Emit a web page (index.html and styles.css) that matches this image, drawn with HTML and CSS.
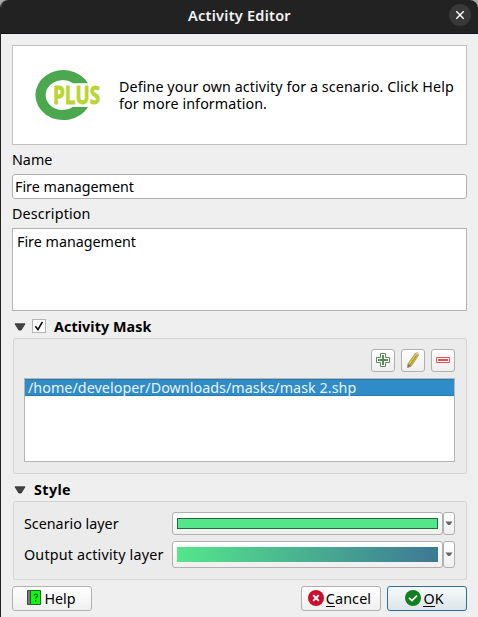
FILE: index.html
```html
<!DOCTYPE html>
<html lang="en">
<head>
<meta charset="utf-8">
<title>Activity Editor</title>
<link rel="stylesheet" href="styles.css">
</head>
<body>
<div class="window">
  <header class="titlebar">
    <h1 class="title">Activity Editor</h1>
    <button class="close" aria-label="Close"><svg width="22" height="22" viewBox="0 0 22 22"><path d="M7.3 7.3l7.4 7.4M14.7 7.3l-7.4 7.4" stroke="#fff" stroke-width="1.4"/></svg></button>
  </header>
  <main class="content">
    <section class="banner">
      <svg class="logo" width="66" height="50" viewBox="0 0 66 50">
        <path d="M53 13.2A28 25 0 1 0 53 37H38A17 15 0 1 1 38 13.2Z" fill="#4ba84f"/>
        <text class="logo-text" x="18" y="34" textLength="47" lengthAdjust="spacingAndGlyphs">PLUS</text>
      </svg>
      <p class="intro"><span class="intro-line">Define your own activity for a scenario. Click Help</span> <span class="intro-line">for more information.</span></p>
    </section>
    <label class="label name-label">Name</label>
    <div class="input"><span class="fire">Fire management</span></div>
    <label class="label desc-label">Description</label>
    <div class="textarea"><span class="fire">Fire management</span></div>

    <div class="heading mask-heading">
      <svg class="tri" width="12" height="8" viewBox="0 0 12 8"><path d="M1 .8h10L7.2 7H4.8Z" fill="#444" stroke="#2b2b2b" stroke-width=".8"/></svg>
      <span class="check"><svg width="12" height="12" viewBox="0 0 12 12"><path d="M2.3 6.2L5 9.6 9.4 1.8" fill="none" stroke="#111" stroke-width="1.7"/></svg></span>
      <span class="mask-title">Activity Mask</span>
    </div>
    <section class="group mask-group">
      <div class="tools">
        <button class="tool" aria-label="Add"><svg width="16" height="16" viewBox="0 0 16 16"><path d="M5.5 1.5h5v4h4v5h-4v4h-5v-4h-4v-5h4z" fill="#fff" stroke="#5a8c5a"/><path d="M8 3v10M3 8h10" stroke="#5a8c5a" stroke-width="2"/></svg></button>
        <button class="tool" aria-label="Edit"><svg width="16" height="16" viewBox="0 0 16 16"><path d="M10.4 1.2L13.6 3 6.3 14 2.6 15.5 3 11.8Z" fill="#dfca48" stroke="#9c8c31" stroke-width=".8"/><path d="M11.5 3.5L5 13" stroke="#a9942c" stroke-width="1.2"/><path d="M10.4 1.2L12 .3 14 1.5 13.6 3.2Z" fill="#ddd" stroke="#aaa" stroke-width=".5"/><path d="M3 11.8L6.3 14 2.6 15.6Z" fill="#777"/></svg></button>
        <button class="tool" aria-label="Remove"><svg width="16" height="16" viewBox="0 0 16 16"><path d="M1.5 5.5h13v5h-13z" fill="#fff" stroke="#ec4e51"/><path d="M3 8h10" stroke="#ec4e51" stroke-width="2"/></svg></button>
      </div>
      <div class="list"><div class="row-selected"><span class="path">/home/developer/Downloads/masks/mask 2.shp</span></div></div>
    </section>

    <div class="heading style-heading">
      <svg class="tri" width="12" height="8" viewBox="0 0 12 8"><path d="M1 .8h10L7.2 7H4.8Z" fill="#444" stroke="#2b2b2b" stroke-width=".8"/></svg>
      <span class="style-title">Style</span>
    </div>
    <section class="group style-group">
      <div class="style-row scenario-row">
        <span class="style-label scenario">Scenario layer</span>
        <button class="swatch-button"><span class="swatch solid"></span></button>
        <button class="drop" aria-label="Options"><svg width="8" height="5" viewBox="0 0 8 5"><path d="M.5 .5h7L5 4H3Z" fill="#666"/></svg></button>
      </div>
      <div class="style-row output-row">
        <span class="style-label output">Output activity layer</span>
        <button class="swatch-button"><span class="swatch ramp"></span></button>
        <button class="drop" aria-label="Options"><svg width="8" height="5" viewBox="0 0 8 5"><path d="M.5 .5h7L5 4H3Z" fill="#666"/></svg></button>
      </div>
    </section>

    <footer class="actions">
      <button class="action help"><svg class="book" width="14" height="15" viewBox="0 0 14 15"><path d="M.5 .5h3v14h-3z" fill="#777" stroke="#444"/><path d="M3.5 .5h10v14h-10z" fill="#0cf914" stroke="#176b17"/><path d="M7 5.5c0-2 3.5-2 3.5.2 0 1.5-1.8 1.3-1.8 3M8.7 10v1.5" fill="none" stroke="#064d06" stroke-width="1.2"/></svg><span class="help-text">Help</span></button>
      <button class="action cancel"><svg width="16" height="16" viewBox="0 0 16 16"><circle cx="8" cy="8" r="8" fill="#c8102e"/><path d="M5.2 5.2l5.6 5.6M10.8 5.2l-5.6 5.6" stroke="#fff" stroke-width="1.9"/></svg><span class="cancel-text"><span class="mnemonic">C</span>ancel</span></button>
      <button class="action ok"><svg width="16" height="16" viewBox="0 0 16 16"><circle cx="8" cy="8" r="8" fill="#138020"/><path d="M4 7.8l3 2.8 5-5" fill="none" stroke="#fff" stroke-width="1.7"/></svg><span class="ok-text"><span class="mnemonic">O</span>K</span></button>
    </footer>
  </main>
</div>
</body>
</html>
```
FILE: styles.css
```css
* { box-sizing: border-box; }
body { margin: 0; background: #aaa; font: 14.3px/17px "Noto Sans", "Open Sans", sans-serif; color: #000; }
button { padding: 0; margin: 0; font: inherit; color: inherit; }
svg { display: block; flex: none; }
span { white-space: nowrap; }
.window { width: 478px; height: 617px; background: #efefef; border-left: 1px solid #222; border-radius: 8px 8px 0 0; overflow: hidden; }
.titlebar { height: 34px; background: #222; border-bottom: 1px solid #17131a; display: flex; align-items: center; justify-content: center; position: relative; }
.title { margin: 0 0 3px; font-size: 14.5px; letter-spacing: .25px; line-height: 18px; font-weight: 600; color: #f4f4f4; white-space: nowrap; }
.close { position: absolute; right: 7px; top: 4px; width: 22px; height: 22px; border: 0; border-radius: 50%; background: #383838; }
.content { padding: 11px 11px 0; display: flex; flex-direction: column; }
.banner { height: 100px; border: 1px solid #c0c0c0; background: #fff; display: flex; align-items: center; padding-left: 22px; }
.logo { margin-right: 18px; overflow: visible; }
.logo-text { font: 700 25px "Open Sans", sans-serif; fill: #b9d532; stroke: #b9d532; stroke-width: .9px; }
.intro { margin: 0; line-height: 17px; letter-spacing: .09px; }
.intro-line { display: block; height: 17px; }
.label { height: 29px; padding-top: 6px; }
.desc-label { letter-spacing: .15px; }
.input { height: 25px; border: 1px solid #b0b0b0; border-radius: 3px; background: #fff; padding: 3px 2px; }
.textarea { height: 83px; border: 1px solid #b4b4b4; background: #fff; padding: 4px 4px; }
.heading { font-weight: 700; display: flex; align-items: center; height: 27px; padding: 4px 0 0 2px; }
.check { width: 14px; height: 14px; border: 1px solid #b4b4b4; background: #fff; margin: -1px 8px 0 6px; }
.mask-title { letter-spacing: .08px; }
.style-title { margin-left: 8px; letter-spacing: .4px; }
.group { margin-left: 1px; border: 1px solid #d5d5d5; border-radius: 2px; background: #ebebeb; }
.mask-group { height: 136px; padding: 10px 11px 0 10px; }
.tools { display: flex; justify-content: flex-end; gap: 6px; margin-bottom: 6px; }
.tool, .swatch-button, .drop, .action { border: 1px solid #b0b0b0; border-radius: 3px; background: linear-gradient(#fff, #efefef); display: flex; align-items: center; justify-content: center; }
.tool { width: 24px; height: 23px; }
.tool svg { margin-top: -1px; }
.list { height: 84px; border: 1px solid #b4b4b4; background: #fff; }
.row-selected { height: 17px; color: #e9f3fa; background: #308cc6; border: solid #2a7cb0; border-width: 1px 0; line-height: 15px; padding-left: 3px; }
.path { letter-spacing: .05px; }
.style-group { height: 79px; padding: 10px 11px 0 10px; }
.style-row { display: grid; grid-template-columns: 148px 271px 12px; align-items: center; }
.output { letter-spacing: .19px; }
.scenario-row { height: 23px; margin-bottom: 6px; }
.output-row { height: 27px; }
.swatch-button, .drop { height: 100%; }
.swatch { width: 261px; }
.solid { height: 11px; background: #54e68b; border: 1px solid #26683f; }
.ramp { height: 15px; background: linear-gradient(90deg, #54e68b, #3e7895); }
.actions { display: flex; gap: 6px; margin-top: 6px; }
.action { width: 80px; height: 25px; }
.action svg { margin-top: -2px; }
.help { margin-right: auto; gap: 3px; padding-right: 1px; }
.cancel, .ok { gap: 2px; }
.cancel { padding-right: 3px; letter-spacing: .15px; }
.ok { padding-right: 5px; border-color: #2b6f99; background: linear-gradient(#f7fafc, #dce5ea); }
.mnemonic { border-bottom: 1px solid #000; display: inline-block; height: 17px; }
```
